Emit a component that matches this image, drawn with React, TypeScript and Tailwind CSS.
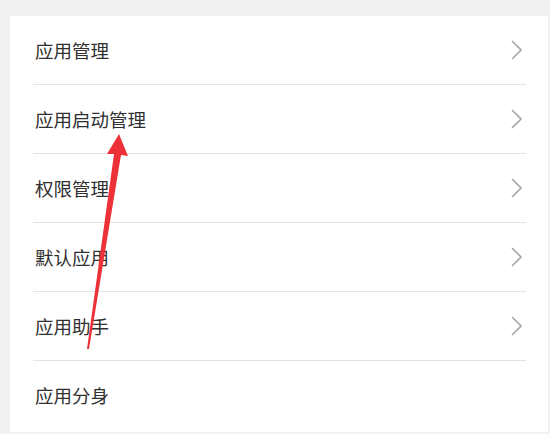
const items = [
  { label: '应用管理', arrow: true },
  { label: '应用启动管理', arrow: true },
  { label: '权限管理', arrow: true },
  { label: '默认应用', arrow: true },
  { label: '应用助手', arrow: true },
  { label: '应用分身', arrow: false },
];

function Chevron() {
  return (
    <svg width="11" height="20" viewBox="0 0 11 20" className="mr-[4px]">
      <path d="M1 1 L10 10 L1 19" fill="none" stroke="#a6a6a6" strokeWidth="1.6" />
    </svg>
  );
}

export default function App() {
  return (
    <div
      className="relative w-[550px] h-[434px] overflow-hidden bg-[#f1f1f1] pt-4 pl-[10px] pr-[2px]"
      style={{ fontFamily: '"Noto Sans CJK SC", "Noto Sans", sans-serif' }}
    >
      <div className="bg-white h-[416px] pl-[23px] pr-[22px]">
        {items.map((item, i) => (
          <div
            key={item.label}
            className={`flex items-center justify-between h-[69px] ${
              i < items.length - 1 ? 'border-b border-[#e3e3e3]' : ''
            }`}
          >
            <span className="text-[18.5px] text-[#303030] leading-none pl-[2px]">{item.label}</span>
            {item.arrow && <Chevron />}
          </div>
        ))}
      </div>

      {/* 红色箭头标注 */}
      <svg className="absolute left-0 top-0 pointer-events-none" width="550" height="434">
        <polygon points="119,134 107,154 114,154 87,349 89,349 121,155 128,156" fill="#ec3238" />
      </svg>
    </div>
  );
}
